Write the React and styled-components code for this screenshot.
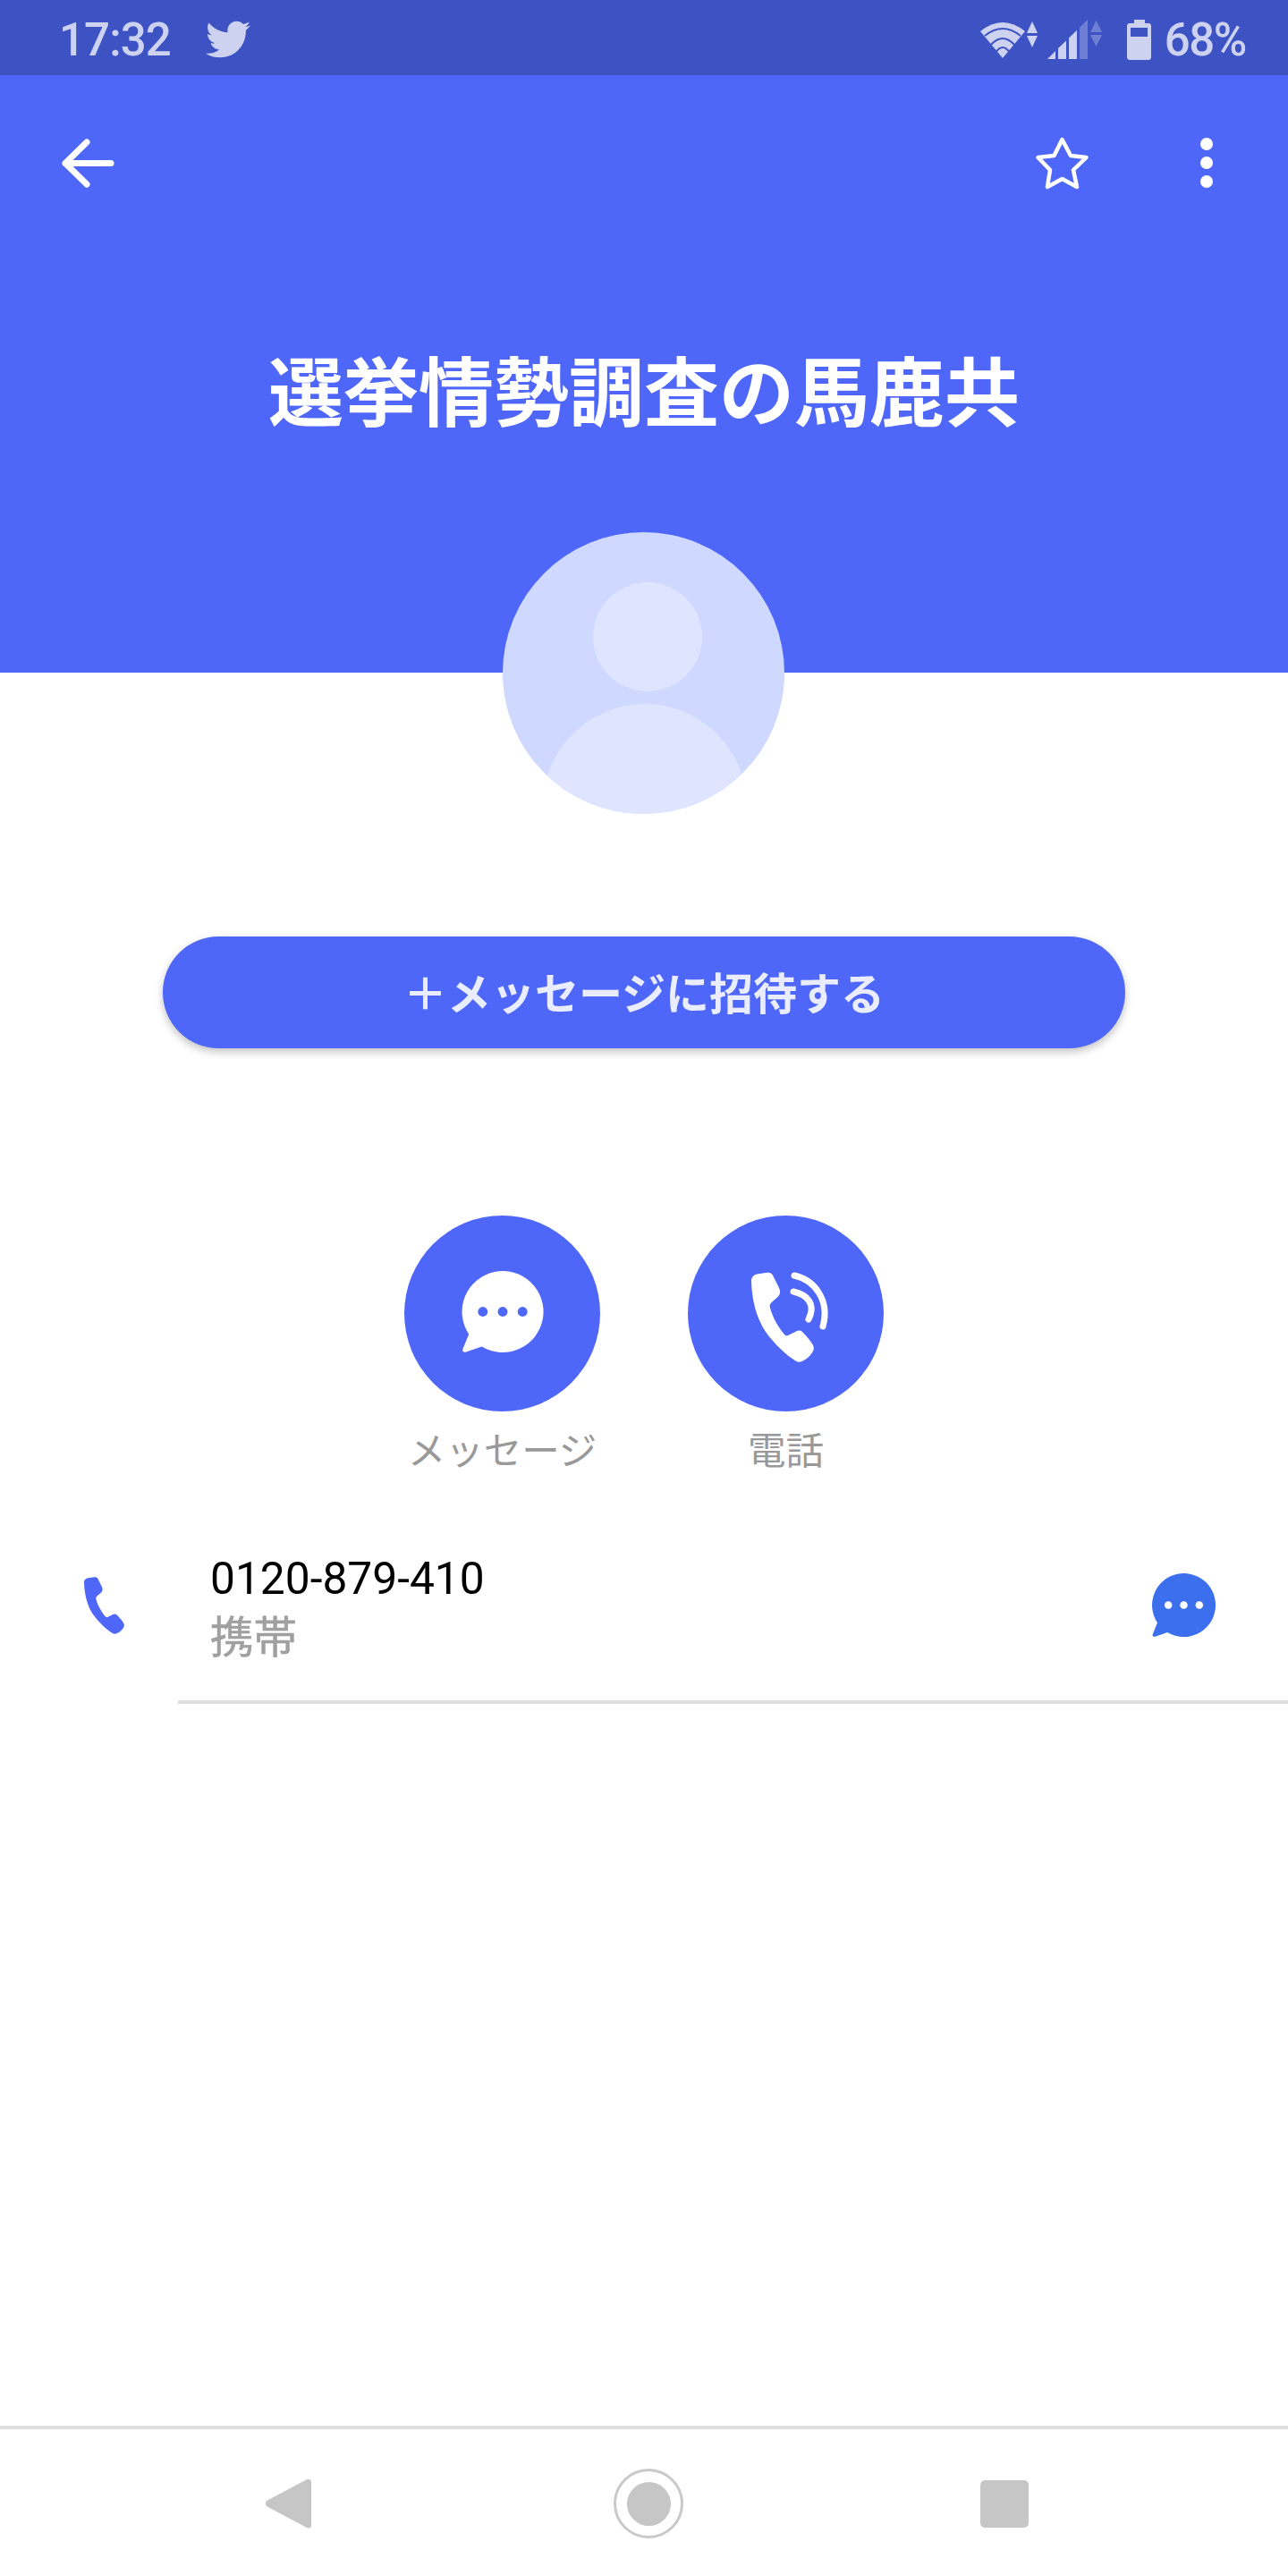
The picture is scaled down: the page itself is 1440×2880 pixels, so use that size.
import styled, { createGlobalStyle } from "styled-components";
import { FaTwitter } from "react-icons/fa";

const BLUE = "#4f67f8";
const STATUS_INK = "#ccd2f0";
const STATUS_BG = "#3d53c4";
const HANDSET =
  "M71 73C71 69 73.5 66.5 77 65.5L89 63.8C91.5 63.5 93.8 64.5 95 66.8L102 81C103.8 85 103.4 88 101 90.5L93.5 97.3C91.8 98.9 91.3 100.5 91.8 102.5C94.5 113 101 125 108 133C109.2 134.3 110.5 134.5 112 134L121 129.5C123.8 128 126.3 128.3 128.5 130.5C133.5 135.5 137.5 140.5 140 145C141.3 147.5 141 150 139.5 152.5C136.5 157.5 132 161 127.5 163C125 164.2 122.8 163.9 120.5 162.5C110 156 97 144 87 130C77 115 71.5 95 71 73Z";

const GlobalStyle = createGlobalStyle`
  html, body {
    margin: 0;
    padding: 0;
    background: #fff;
  }
  body {
    font-family: Roboto, "Noto Sans CJK JP", sans-serif;
  }
  * {
    box-sizing: border-box;
  }
`;

const Page = styled.div`
  width: 1440px;
  height: 2880px;
  display: flex;
  flex-direction: column;
  overflow: hidden;
`;

const StatusBar = styled.div`
  height: 84px;
  padding: 4px 47px 0 66px;
  display: flex;
  align-items: center;
  background: ${STATUS_BG};
  color: ${STATUS_INK};
  font-size: 51px;
  line-height: 1;
`;

const Time = styled.span`
  width: 164px;
  font-weight: 500;
  letter-spacing: -0.9px;
`;

const Spacer = styled.div`
  flex: 1;
`;

const StatusIcon = styled.svg`
  display: block;
  flex: none;
  margin-left: ${(p) => p.$gap || 0}px;
  fill: ${STATUS_INK};
`;

const Percent = styled.span`
  margin-left: 15px;
  font-weight: 500;
  letter-spacing: -1.4px;
`;

const Header = styled.header`
  height: 668px;
  background: ${BLUE};
`;

const Toolbar = styled.div`
  height: 196px;
  padding: 0 84px 0 69px;
  display: flex;
  align-items: center;
  color: #fff;
`;

const ToolIcon = styled.svg`
  display: block;
  flex: none;
  margin-left: ${(p) => p.$gap || 0}px;
`;

const Title = styled.h1`
  margin: 102px 0 0;
  font-size: 84px;
  line-height: 120px;
  font-weight: 700;
  color: #fff;
  text-align: center;
`;

const Main = styled.main`
  flex: 1;
  display: flex;
  flex-direction: column;
  align-items: center;
`;

const Avatar = styled.div`
  position: relative;
  width: 315px;
  height: 315px;
  margin: -157px 2px 0 0;
  border-radius: 50%;
  overflow: hidden;
  background: #cfd9ff;
`;

const AvatarArt = styled.svg`
  display: block;
  fill: #dfe5ff;
`;

const InviteButton = styled.button`
  width: 1076px;
  height: 125px;
  margin-top: 137px;
  padding: 0 0 4px;
  border: 0;
  border-radius: 63px;
  background: ${BLUE};
  color: #e9edff;
  font-family: inherit;
  font-size: 49px;
  font-weight: 700;
  box-shadow: 0 4px 10px rgba(0, 0, 0, 0.24);
`;

const Actions = styled.div`
  margin-top: 187px;
  display: flex;
  gap: 98px;
`;

const Action = styled.div`
  width: 219px;
  display: flex;
  flex-direction: column;
  align-items: center;
`;

const ActionCircle = styled.div`
  width: 219px;
  height: 219px;
  border-radius: 50%;
  background: ${BLUE};
`;

const ActionArt = styled.svg`
  display: block;
`;

const ActionLabel = styled.span`
  margin-top: 15px;
  font-size: 42.5px;
  line-height: 60px;
  color: #999;
  white-space: nowrap;
`;

const ContactRow = styled.div`
  align-self: stretch;
  margin-top: 82px;
  display: flex;
`;

const PhoneCell = styled.div`
  width: 199px;
  flex: none;
  padding: 28px 0 0 94px;
`;

const PhoneArt = styled.svg`
  display: block;
  fill: ${BLUE};
`;

const ContactBody = styled.div`
  flex: 1;
  height: 170px;
  padding: 0 81px 0 36px;
  display: flex;
  justify-content: space-between;
  border-bottom: 4px solid #dedede;
`;

const Number = styled.div`
  font-size: 49.7px;
  line-height: 61px;
  color: #000;
`;

const Kind = styled.div`
  margin-top: 6px;
  font-size: 48.5px;
  line-height: 60px;
  color: #a0a0a0;
  -webkit-text-stroke: 0.6px #a0a0a0;
`;

const ChatButton = styled.div`
  margin-top: 24px;
`;

const NavBar = styled.nav`
  height: 168px;
  padding: 2px 0 0 297px;
  display: flex;
  align-items: center;
  border-top: 4px solid #dedede;
`;

const NavBack = styled.svg`
  display: block;
  fill: #c6c6c6;
`;

const NavHome = styled.div`
  width: 78px;
  height: 78px;
  margin: 0 332px 0 338px;
  display: flex;
  align-items: center;
  justify-content: center;
  border: 3px solid #c9c9c9;
  border-radius: 50%;
`;

const NavHomeDot = styled.div`
  width: 49px;
  height: 49px;
  border-radius: 50%;
  background: #c6c6c6;
`;

const NavSquare = styled.div`
  width: 54px;
  height: 53px;
  border-radius: 5px;
  background: #c6c6c6;
`;

function Bubble({ size, x = 0, y = 0, fill, dot }) {
  return (
    <svg x={x} y={y} width={size} height={size} viewBox="0 0 100 100" style={{ display: "block", overflow: "visible" }}>
      <path d="M8.4 77.7A50 50 0 1 1 24.3 92.9L5 99.5C2 100.5 0 98.5 1 96Z" fill={fill} />
      <circle cx="25.6" cy="50" r="6" fill={dot} />
      <circle cx="50" cy="50" r="6" fill={dot} />
      <circle cx="74.4" cy="50" r="6" fill={dot} />
    </svg>
  );
}

function WifiIcon() {
  return (
    <StatusIcon width="64" height="41" viewBox="0 -1 64 41" $gap={0}>
      <path d="M0 10Q25-10 50 10L25 40Z" />
      <path d="M5 15Q25-1 45 15M11 26Q25 10 39 26M17 34Q25 22 33 34" fill="none" stroke={STATUS_BG} strokeWidth="2" />
      <path d="M58-1L64 12H52ZM52 15H64L58 28Z" />
    </StatusIcon>
  );
}

function SignalIcon() {
  return (
    <StatusIcon width="61" height="44" viewBox="0 0 61 44" $gap={11}>
      <path d="M0 44L9 35V44ZM12 32L21 23.5V44H12ZM24 20.5L33 11.7V44H24Z" />
      <path d="M36 8.8L45 0V44H36ZM54.5 1L61 14H48ZM48 17H61L54.5 30Z" opacity="0.35" />
    </StatusIcon>
  );
}

function BatteryIcon() {
  return (
    <StatusIcon width="27" height="45" viewBox="0 0 27 45" $gap={28}>
      <path
        fillRule="evenodd"
        d="M8 0H20V4H24C25.7 4 27 5.3 27 7V42C27 43.7 25.7 45 24 45H3C1.3 45 0 43.7 0 42V7C0 5.3 1.3 4 3 4H8ZM4 9V19H23V9Z"
      />
    </StatusIcon>
  );
}

export default function App() {
  return (
    <Page>
      <GlobalStyle />
      <StatusBar>
        <Time>17:32</Time>
        <FaTwitter size={50} color={STATUS_INK} />
        <Spacer />
        <WifiIcon />
        <SignalIcon />
        <BatteryIcon />
        <Percent>68%</Percent>
      </StatusBar>

      <Header>
        <Toolbar>
          <ToolIcon width="59" height="55" viewBox="0 0 59 55" fill="none" stroke="#fff" strokeWidth="7" strokeLinecap="round" strokeLinejoin="round">
            <path d="M28 4L4 27.5L28 51M4 27.5H55" />
          </ToolIcon>
          <Spacer />
          <ToolIcon width="59" height="59" viewBox="0 0 59 59" fill="none" stroke="#fff" strokeWidth="4.5" strokeLinejoin="round">
            <path d="M29.5 3L39 21L56.5 23L42 37L46 56L29.5 47L13 56L16 37L2.5 23L20.5 21Z" />
          </ToolIcon>
          <ToolIcon width="14" height="56" viewBox="0 0 14 56" fill="#fff" $gap={125}>
            <circle cx="7" cy="7" r="7" />
            <circle cx="7" cy="28" r="7" />
            <circle cx="7" cy="49" r="7" />
          </ToolIcon>
        </Toolbar>
        <Title>選挙情勢調査の馬鹿共</Title>
      </Header>

      <Main>
        <Avatar>
          <AvatarArt width="315" height="315" viewBox="0 0 315 315">
            <circle cx="162" cy="117" r="61" />
            <circle cx="159" cy="306" r="114" />
          </AvatarArt>
        </Avatar>

        <InviteButton>＋メッセージに招待する</InviteButton>

        <Actions>
          <Action>
            <ActionCircle>
              <ActionArt width="219" height="219" viewBox="0 0 219 219">
                <Bubble size={91} x={64.5} y={62} fill="#fff" dot={BLUE} />
              </ActionArt>
            </ActionCircle>
            <ActionLabel>メッセージ</ActionLabel>
          </Action>
          <Action>
            <ActionCircle>
              <ActionArt width="219" height="219" viewBox="0 0 219 219">
                <path d={HANDSET} fill="#fff" />
                <path
                  d="M119 67C142 72 159 95 151 124M118 85C132 88 144 98 135 116"
                  fill="none"
                  stroke="#fff"
                  strokeWidth="7"
                  strokeLinecap="round"
                />
              </ActionArt>
            </ActionCircle>
            <ActionLabel>電話</ActionLabel>
          </Action>
        </Actions>

        <ContactRow>
          <PhoneCell>
            <PhoneArt width="45" height="64" viewBox="71 63.5 70 100.5" preserveAspectRatio="none">
              <path d={HANDSET} />
            </PhoneArt>
          </PhoneCell>
          <ContactBody>
            <div>
              <Number>0120-879-410</Number>
              <Kind>携帯</Kind>
            </div>
            <ChatButton>
              <svg width="71" height="71" viewBox="0 0 71 71" style={{ display: "block" }}>
                <Bubble size={71} fill="#3b6fee" dot="#fff" />
              </svg>
            </ChatButton>
          </ContactBody>
        </ContactRow>
      </Main>

      <NavBar>
        <NavBack width="51" height="56" viewBox="0 0 51 56">
          <path d="M1 25L46 1C49 0 51 1 51 4V52C51 55 49 56 46 55L1 31C-0.5 29 -0.5 27 1 25Z" />
        </NavBack>
        <NavHome>
          <NavHomeDot />
        </NavHome>
        <NavSquare />
      </NavBar>
    </Page>
  );
}
